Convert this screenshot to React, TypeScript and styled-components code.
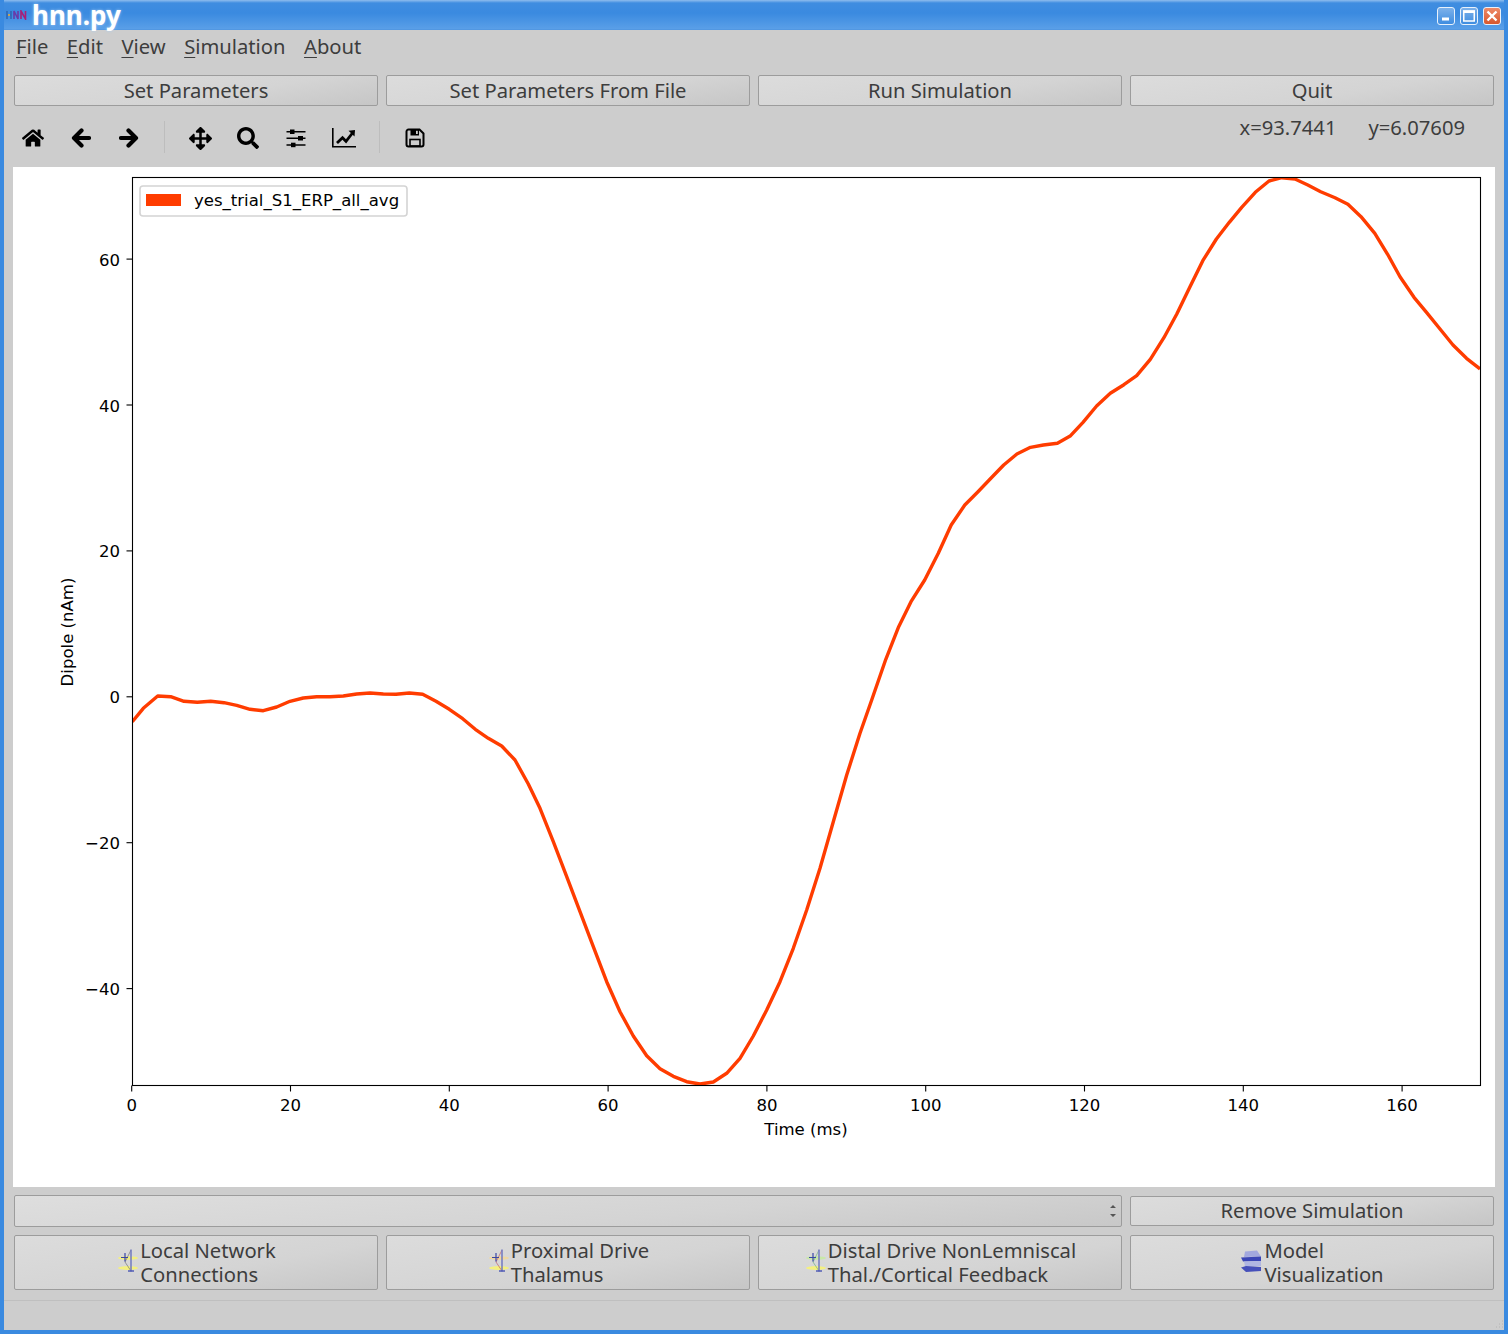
import React from "react";
import styled, { createGlobalStyle } from "styled-components";
import { FaHome, FaArrowsAlt, FaSearch } from "react-icons/fa";

const Global = createGlobalStyle`
  html, body { margin: 0; padding: 0; background: #cdcdcd; }
  * { box-sizing: border-box; }
`;

const Window = styled.div`
  width: 1508px; height: 1334px; display: flex; flex-direction: column; position: relative;
  background: #cdcdcd; border: 4px solid #3a8ae0; border-top: 0;
  font-family: "Noto Sans", sans-serif; font-size: 20.2px; color: #3d3d3d; overflow: hidden;
`;
const TitleBar = styled.div`
  height: 30px; margin: 0 -4px; padding: 0 7px 0 6px; display: flex; align-items: center; color: #fff;
  background: linear-gradient(180deg, #8fbdee 0, #3f8de0 3px, #3a8ae0 13px, #5a9fe8 29px, #4a90dc 30px);
`;
const Title = styled.span`
  font: bold 26px/30px "Noto Sans", sans-serif; margin-left: 5px; flex: 1; text-shadow: 0 0 3px #a8cdf2; white-space: nowrap;
`;
const WinButtons = styled.div`display: flex; gap: 5px; margin-top: 1px;`;
const WinButton = styled.div<{ $close?: boolean }>`
  width: 18px; height: 18px; border: 1px solid #e8f1fb; border-radius: 3px; display: flex; align-items: center; justify-content: center;
  background: ${p => (p.$close ? "linear-gradient(180deg,#ee8a68,#d8582e)" : "linear-gradient(180deg,#7db1ea,#3f8de0)")};
`;
const MenuBar = styled.div`
  height: 35px; padding: 0 0 3px 8px; display: flex; align-items: center; gap: 14.5px;
  & > span { padding-left: 4px; }
  u { text-underline-offset: 3px; text-decoration-thickness: 1px; }
`;
const Grid4 = styled.div`
  display: grid; grid-template-columns: repeat(4, 1fr); gap: 8px; padding: 0 10px;
`;
const TopRow = styled(Grid4)`margin-top: 10px;`;
const PushButton = styled.div`
  height: 31px; display: flex; align-items: center; justify-content: center; white-space: nowrap;
  border: 1px solid #9c9c9c; border-radius: 2px; padding-bottom: 2px;
  background: linear-gradient(170deg, #dcdcdc 0%, #d4d4d4 60%, #c6c6c6 100%);
`;
const SlimButton = styled(PushButton)`height: 30px;`;
const ToolBar = styled.div`height: 61px; display: flex; padding: 14px 0 0 5px; position: relative;`;
const Tool = styled.div`
  width: 48px; height: 36px; display: flex; align-items: center; justify-content: center; color: #000;
`;
const Sep = styled.div`
  width: 23px; height: 36px; display: flex; justify-content: center;
  &::after { content: ""; width: 1px; height: 32px; margin-top: 1px; background: #bdbdbd; }
`;
const Coords = styled.div`
  margin-left: auto; margin-top: -7px; padding-right: 39px; display: flex; gap: 32px; line-height: 28px; height: 28px;
`;
const Canvas = styled.div`
  height: 1020px; margin: 0 9px; background: #fff; flex: none;
  svg { display: block; }
`;
const ComboRow = styled(Grid4)`margin-top: 8px; align-items: center;`;
const Combo = styled.div`
  grid-column: span 3; height: 32px; display: flex; align-items: center; justify-content: flex-end; padding-right: 4px;
  border: 1px solid #9c9c9c; border-radius: 2px;
  background: linear-gradient(175deg, #dedede 0%, #d4d4d4 60%, #c8c8c8 100%);
`;
const BottomRow = styled(Grid4)`margin-top: 8px;`;
const IconButton = styled.div`
  height: 55px; display: flex; align-items: center; justify-content: center; padding-bottom: 1px;
  border: 1px solid #9c9c9c; border-radius: 2px;
  background: linear-gradient(170deg, #dcdcdc 0%, #d4d4d4 60%, #c6c6c6 100%);
`;
const TwoLines = styled.div`line-height: 24px; white-space: nowrap;`;
const Status = styled.div`flex: 1; margin-top: 10px; border-top: 1px solid #bfbfbf;`;
const Grip = styled.svg`position: absolute; right: 0; bottom: 0;`;
const TickText = styled.text`font: 16.55px "DejaVu Sans", sans-serif; fill: #000;`;
const SoftSvg = styled.svg`filter: blur(0.5px);`;

const curve = [
  [132.3,721.7],[143.3,708.3],[157.7,696],[170.7,696.7],[184,701.3],[197.3,702.3],[210.7,701.3],[224,702.7],[236.7,705.3],[250,709.3],[263.3,710.7],[276.7,707],[290,701.3],[303.3,698],[316.7,696.7],[330,696.7],[343.3,696],[356.7,694],[370,693],[383.3,694],[396,694.3],[409.3,693],[422.7,694.3],[436,701.3],[449.3,709.3],[462.7,718.7],[475.3,729.3],[488.3,738.3],[501.7,746],[515,760],[528.3,784],
  [540,808.3],[553.3,841.7],[566.7,876.7],[580,911.7],[593.3,946.7],[606.7,981.7],[620,1011.7],[633.3,1036],[646.7,1055.7],[660,1068.7],[673.3,1076.3],[686.7,1081.7],[700,1084],[713.3,1082],[726.7,1073.3],[740,1058.3],[753.3,1036],[766.7,1010],[780,981.7],[793.3,948.3],[806.7,910],[820,868.3],[833.3,821.7],[846.7,775],[860,733.3],[871.7,700],
  [885.8,659.3],[898.7,626.7],[911,601.7],[924.7,580],[938.3,553.3],[951.2,525],[964.8,505],[978,491.7],[990.9,478.3],[1003.7,465],[1016.9,454],[1030.5,447.3],[1043.4,445],[1057.4,443.3],[1070.6,435.7],[1083,422.3],[1096.6,406],[1110.3,393.3],[1123.9,384.7],[1136.7,375.7],[1150.3,359.3],[1163.9,337.7],[1176.8,314],[1190,286.7],[1202.8,260.7],[1216.4,239],[1229.3,222.3],[1241.7,207.3],[1255.3,192.3],[1269,181],[1281.8,177.7],[1295,179],[1307.8,185],[1320.7,191.7],[1335,197.7],[1347.9,204.3],[1361,216.7],[1374.8,233.3],[1387.6,254.3],[1400,276.7],[1414,297.3],[1426.5,312.3],[1440,329],[1453,345],[1466.5,358.3],[1480,369],
];

const xTicks = [0, 20, 40, 60, 80, 100, 120, 140, 160];
const yTicks = [60, 40, 20, 0, -20, -40];
const xPos = (v: number) => 131.7 + v * 7.94;
const yPos = (v: number) => 696.8 - v * 7.295;

function Chart() {
  return (
    <svg width={1482} height={1020} viewBox="13 167 1482 1020">
      <defs>
        <clipPath id="axes"><rect x={132} y={177} width={1348.5} height={908.5} /></clipPath>
      </defs>
      <polyline clipPath="url(#axes)" points={curve.map(p => p.join(",")).join(" ")} fill="none" stroke="#ff3c00" strokeWidth={3.4} strokeLinejoin="round" />
      <rect x={132.5} y={177.5} width={1348} height={908} fill="none" stroke="#000" strokeWidth={1.1} />
      {xTicks.map(t => (
        <g key={t}>
          <line x1={xPos(t)} x2={xPos(t)} y1={1085.5} y2={1091.5} stroke="#000" strokeWidth={1.1} />
          <TickText x={xPos(t)} y={1111} textAnchor="middle">{t}</TickText>
        </g>
      ))}
      {yTicks.map(t => (
        <g key={t}>
          <line x1={126.5} x2={132.5} y1={yPos(t)} y2={yPos(t)} stroke="#000" strokeWidth={1.1} />
          <TickText x={120} y={yPos(t) + 6.5} textAnchor="end">{t < 0 ? `\u2212${-t}` : t}</TickText>
        </g>
      ))}
      <TickText x={806} y={1135} textAnchor="middle">Time (ms)</TickText>
      <TickText transform="translate(73,632) rotate(-90)" textAnchor="middle">Dipole (nAm)</TickText>
      <rect x={140} y={186} width={267} height={30} rx={3} fill="#fff" fillOpacity={0.9} stroke="#d4d4d4" strokeWidth={1.6} />
      <rect x={146} y={194} width={35} height={12} fill="#ff3c00" />
      <TickText x={194} y={206}>yes_trial_S1_ERP_all_avg</TickText>
    </svg>
  );
}

function Logo() {
  return (
    <svg width={21} height={10} viewBox="0 0 21 10">
      <path d="M1 1v8M5 1v8M1 5h4" stroke="#2f68b4" strokeWidth={1.6} fill="none" />
      <path d="M8 9V1l4 8V1" stroke="#6a3aa8" strokeWidth={1.6} fill="none" />
      <path d="M15 9V1l4.500 8V1" stroke="#a81f78" strokeWidth={1.6} fill="none" />
      <circle cx={3} cy={5} r={1.1} fill="#e8b040" />
    </svg>
  );
}

const ArrowLeftIcon = () => (
  <svg width={20} height={20} viewBox="0 0 20 20">
    <path d="M18 10H4M10.500 2.500L3 10L10.500 17.500" fill="none" stroke="#000" strokeWidth={4.2} strokeLinecap="round" strokeLinejoin="round" />
  </svg>
);
const ArrowRightIcon = () => (
  <svg width={20} height={20} viewBox="0 0 20 20">
    <path d="M2 10H16M9.500 2.500L17 10L9.500 17.500" fill="none" stroke="#000" strokeWidth={4.2} strokeLinecap="round" strokeLinejoin="round" />
  </svg>
);
const SlidersIcon = () => (
  <svg width={20} height={19} viewBox="0 0 20 19">
    <path d="M0.500 2.700H19.500M0.500 9.300H19.500M0.500 16H19.500" stroke="#000" strokeWidth={1.6} />
    <rect x={4} y={0.500} width={4.500} height={4.500} fill="#000" />
    <rect x={12} y={7} width={5} height={4.500} fill="#000" />
    <rect x={5} y={13.700} width={4.500} height={4.500} fill="#000" />
  </svg>
);
const LineChartIcon = () => (
  <svg width={24} height={20} viewBox="0 0 24 20">
    <path d="M0.800 0V18.700H24" fill="none" stroke="#000" strokeWidth={1.6} />
    <path d="M5 15L10.500 9.800L14 13.300L20.500 5" fill="none" stroke="#000" strokeWidth={2.8} />
    <path d="M16.500 2.800L23 2L22.500 8.500Z" fill="#000" />
  </svg>
);
const SaveIcon = () => (
  <svg width={20} height={20} viewBox="0 0 20 20">
    <path d="M1.500 3.500a2 2 0 0 1 2-2H14.500L18.500 5.500V16.500a2 2 0 0 1-2 2H3.500a2 2 0 0 1-2-2Z" fill="none" stroke="#000" strokeWidth={2} />
    <path d="M5.500 1.500H14V7.500H5.500Z" fill="#000" />
    <rect x={11} y={2.800} width={1.800} height={3.200} fill="#cdcdcd" />
    <rect x={5} y={11.500} width={10} height={6.500} fill="none" stroke="#000" strokeWidth={1.6} />
  </svg>
);

function DriveIcon({ tint, band }: { tint: string; band: string }) {
  return (
    <svg width={24} height={30} viewBox="0 0 24 30">
      <ellipse cx={12} cy={11} rx={10} ry={1.8} fill={band} />
      <ellipse cx={12} cy={21} rx={10} ry={1.9} fill="#f4f080" />
      <path d="M15 3 L9 15 L15 24" stroke={tint} strokeWidth={1} fill="none" opacity={0.7} />
      <path d="M15 2.500v22" stroke="#7078c0" strokeWidth={1.5} />
      <path d="M9 6v8.500M5 10.500h7" stroke="#3a46a8" strokeWidth={1.2} />
      <path d="M12 24h6" stroke="#4a55b4" strokeWidth={1.4} />
    </svg>
  );
}

function ModelIcon() {
  return (
    <SoftSvg width={24} height={30} viewBox="0 0 24 30">
      <path d="M5 4.500 L17 3.500 L21 9.500 L4 10 Z" fill="#a2a8de" />
      <path d="M1 10.500 L21 9.500 L21 14 L3 14.500 Z" fill="#3b46b6" />
      <path d="M4 14.500 L21 14 L21 19 L5 19.500 Z" fill="#b0b6e2" />
      <path d="M1 20.500 L6 19 L21 20 L21 24 L6 25 Z" fill="#4650ba" />
    </SoftSvg>
  );
}

export default function App() {
  return (
    <Window>
      <Global />
      <TitleBar>
        <Logo />
        <Title>hnn.py</Title>
        <WinButtons>
          <WinButton>
            <svg width={10} height={10} viewBox="0 0 10 10"><rect x={1} y={6.500} width={7} height={3} fill="#fff" /></svg>
          </WinButton>
          <WinButton>
            <svg width={12} height={12} viewBox="0 0 12 12"><rect x={0.75} y={1} width={10.500} height={10} fill="none" stroke="#fff" strokeWidth={1.5} /><rect x={0} y={0.500} width={12} height={2.500} fill="#fff" /></svg>
          </WinButton>
          <WinButton $close>
            <svg width={12} height={12} viewBox="0 0 12 12"><path d="M1.500 1.500L10.500 10.500M10.500 1.500L1.500 10.500" stroke="#fff" strokeWidth={2.4} /></svg>
          </WinButton>
        </WinButtons>
      </TitleBar>
      <MenuBar>
        <span><u>F</u>ile</span>
        <span><u>E</u>dit</span>
        <span><u>V</u>iew</span>
        <span><u>S</u>imulation</span>
        <span><u>A</u>bout</span>
      </MenuBar>
      <TopRow>
        <PushButton>Set Parameters</PushButton>
        <PushButton>Set Parameters From File</PushButton>
        <PushButton>Run Simulation</PushButton>
        <PushButton>Quit</PushButton>
      </TopRow>
      <ToolBar>
        <Tool><FaHome size={22} /></Tool>
        <Tool><ArrowLeftIcon /></Tool>
        <Tool><ArrowRightIcon /></Tool>
        <Sep />
        <Tool><FaArrowsAlt size={23} /></Tool>
        <Tool><FaSearch size={22} /></Tool>
        <Tool><SlidersIcon /></Tool>
        <Tool><LineChartIcon /></Tool>
        <Sep />
        <Tool><SaveIcon /></Tool>
        <Coords>
          <span>x=93.7441</span>
          <span>y=6.07609</span>
        </Coords>
      </ToolBar>
      <Canvas><Chart /></Canvas>
      <ComboRow>
        <Combo>
          <svg width={8} height={14} viewBox="0 0 8 14"><path d="M4 1L7 4H1ZM4 13L1 10H7Z" fill="#555" /></svg>
        </Combo>
        <SlimButton>Remove Simulation</SlimButton>
      </ComboRow>
      <BottomRow>
        <IconButton><DriveIcon tint="#777" band="#f4f080" /><TwoLines>Local Network<br />Connections</TwoLines></IconButton>
        <IconButton><DriveIcon tint="#c0606a" band="#f0d8a0" /><TwoLines>Proximal Drive<br />Thalamus</TwoLines></IconButton>
        <IconButton><DriveIcon tint="#70b080" band="#c8e8a8" /><TwoLines>Distal Drive NonLemniscal<br />Thal./Cortical Feedback</TwoLines></IconButton>
        <IconButton><ModelIcon /><TwoLines>Model<br />Visualization</TwoLines></IconButton>
      </BottomRow>
      <Status />
      <Grip width={10} height={10} viewBox="0 0 10 10">
        <path d="M8 1h1M5 4h1M8 4h1M2 7h1M5 7h1M8 7h1" stroke="#b4b4b4" strokeWidth={1} />
      </Grip>
    </Window>
  );
}
